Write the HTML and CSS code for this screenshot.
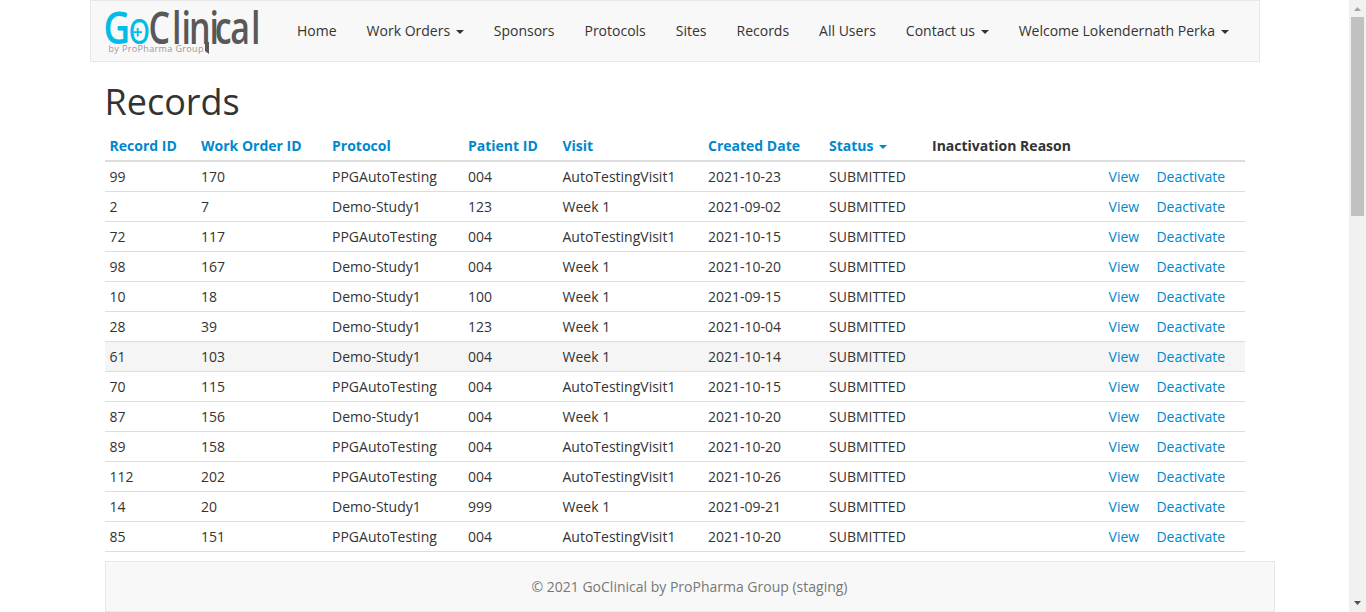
FILE: index.html
```html
<!DOCTYPE html>
<html lang="en">
<head>
<meta charset="utf-8">
<title>Records - GoClinical</title>
<link rel="stylesheet" href="styles.css">
</head>
<body>
<div class="page">
<div class="content">
<nav class="navbar">
<a class="brand" href="#">
<svg class="logo" width="160" height="54" viewBox="100 4 160 54" role="img" aria-label="GoClinical by ProPharma Group">
<text class="logo-go" transform="translate(103.500 43.500) scale(.8 1)" x="0 30.8" y="0">G<tspan class="logo-o">o</tspan></text>
<path class="logo-cross" d="M137.700 28v8.500M133.500 32.200h8.500"/>
<text class="logo-clinical" transform="translate(148.500 43.500) scale(.74 1)" x="0 31.900 44.600 54.700 82.400 89.600 110.500 138.600" y="0">Clinical</text>
<path class="logo-tail" d="M205 42h4v12l-4-3z"/>
<text class="logo-tag" x="108.500" y="52" textLength="95">by ProPharma Group</text>
</svg>
</a>
<ul class="menu">
<li><a href="#">Home</a></li>
<li><a href="#">Work Orders <b class="caret"></b></a></li>
<li><a href="#">Sponsors</a></li>
<li><a href="#">Protocols</a></li>
<li><a href="#">Sites</a></li>
<li><a href="#">Records</a></li>
<li><a href="#">All Users</a></li>
<li><a href="#">Contact us <b class="caret"></b></a></li>
<li><a href="#">Welcome Lokendernath Perka <b class="caret"></b></a></li>
</ul>
</nav>
<main class="main">
<h1>Records</h1>
<table class="records">
<colgroup><col class="c-id"><col class="c-order"><col class="c-protocol"><col class="c-patient"><col class="c-visit"><col class="c-date"><col class="c-status"><col class="c-reason"><col class="c-actions"></colgroup>
<thead><tr><th><a href="#">Record ID</a></th><th><a href="#">Work Order ID</a></th><th><a href="#">Protocol</a></th><th><a href="#">Patient ID</a></th><th><a href="#">Visit</a></th><th><a href="#">Created Date</a></th><th><a href="#">Status <b class="caret"></b></a></th><th>Inactivation Reason</th><th></th></tr></thead>
<tbody>
<tr><td>99</td><td>170</td><td>PPGAutoTesting</td><td>004</td><td>AutoTestingVisit1</td><td>2021-10-23</td><td>SUBMITTED</td><td></td><td><a href="#">View</a><a href="#">Deactivate</a></td></tr>
<tr><td>2</td><td>7</td><td>Demo-Study1</td><td>123</td><td>Week 1</td><td>2021-09-02</td><td>SUBMITTED</td><td></td><td><a href="#">View</a><a href="#">Deactivate</a></td></tr>
<tr><td>72</td><td>117</td><td>PPGAutoTesting</td><td>004</td><td>AutoTestingVisit1</td><td>2021-10-15</td><td>SUBMITTED</td><td></td><td><a href="#">View</a><a href="#">Deactivate</a></td></tr>
<tr><td>98</td><td>167</td><td>Demo-Study1</td><td>004</td><td>Week 1</td><td>2021-10-20</td><td>SUBMITTED</td><td></td><td><a href="#">View</a><a href="#">Deactivate</a></td></tr>
<tr><td>10</td><td>18</td><td>Demo-Study1</td><td>100</td><td>Week 1</td><td>2021-09-15</td><td>SUBMITTED</td><td></td><td><a href="#">View</a><a href="#">Deactivate</a></td></tr>
<tr><td>28</td><td>39</td><td>Demo-Study1</td><td>123</td><td>Week 1</td><td>2021-10-04</td><td>SUBMITTED</td><td></td><td><a href="#">View</a><a href="#">Deactivate</a></td></tr>
<tr class="hovered"><td>61</td><td>103</td><td>Demo-Study1</td><td>004</td><td>Week 1</td><td>2021-10-14</td><td>SUBMITTED</td><td></td><td><a href="#">View</a><a href="#">Deactivate</a></td></tr>
<tr><td>70</td><td>115</td><td>PPGAutoTesting</td><td>004</td><td>AutoTestingVisit1</td><td>2021-10-15</td><td>SUBMITTED</td><td></td><td><a href="#">View</a><a href="#">Deactivate</a></td></tr>
<tr><td>87</td><td>156</td><td>Demo-Study1</td><td>004</td><td>Week 1</td><td>2021-10-20</td><td>SUBMITTED</td><td></td><td><a href="#">View</a><a href="#">Deactivate</a></td></tr>
<tr><td>89</td><td>158</td><td>PPGAutoTesting</td><td>004</td><td>AutoTestingVisit1</td><td>2021-10-20</td><td>SUBMITTED</td><td></td><td><a href="#">View</a><a href="#">Deactivate</a></td></tr>
<tr><td>112</td><td>202</td><td>PPGAutoTesting</td><td>004</td><td>AutoTestingVisit1</td><td>2021-10-26</td><td>SUBMITTED</td><td></td><td><a href="#">View</a><a href="#">Deactivate</a></td></tr>
<tr><td>14</td><td>20</td><td>Demo-Study1</td><td>999</td><td>Week 1</td><td>2021-09-21</td><td>SUBMITTED</td><td></td><td><a href="#">View</a><a href="#">Deactivate</a></td></tr>
<tr><td>85</td><td>151</td><td>PPGAutoTesting</td><td>004</td><td>AutoTestingVisit1</td><td>2021-10-20</td><td>SUBMITTED</td><td></td><td><a href="#">View</a><a href="#">Deactivate</a></td></tr>
</tbody>
</table>
<footer class="footer">© 2021 GoClinical by ProPharma Group (staging)</footer>
</main>
</div>
<div class="scrollbar">
<svg width="17" height="17" viewBox="0 0 17 17"><path d="M5 11h7L8.500 7z" fill="#a3a3a3"/></svg>
<div class="thumb"></div>
<svg class="down" width="17" height="17" viewBox="0 0 17 17"><path d="M5 6h7L8.500 10z" fill="#505050"/></svg>
</div>
</div>
</body>
</html>
```
FILE: styles.css
```css
* { box-sizing: border-box; }
body {
  margin: 0;
  overflow: hidden;
  background: #fff;
  color: #333;
  font: 14px/20px "Open Sans", "Noto Sans", sans-serif;
}
a { color: #0088cc; text-decoration: none; }
.page { display: flex; height: 612px; }
.content { flex: 1; padding-left: 90px; }
.navbar {
  display: flex;
  width: 1170px;
  height: 62px;
  padding-left: 9px;
  background: #f8f8f8;
  border: 1px solid #e7e7e7;
}
.brand { padding-top: 3px; }
.logo { display: block; overflow: visible; }
.logo text { font-size: 46px; font-weight: 600; }
.logo-go { fill: #00bce7; }
.logo .logo-o { font-weight: 400; }
.logo-cross { stroke: #00bce7; stroke-width: 1.8; }
.logo-clinical, .logo-tail { fill: #585858; }
.logo .logo-tag { font-size: 9px; font-weight: 400; fill: #999; }
.menu {
  display: flex;
  margin: 0;
  padding: 20px 0 0 22px;
  list-style: none;
}
.menu a { display: block; padding: 0 15px; color: #333; white-space: nowrap; }
.caret {
  display: inline-block;
  margin-left: 2px;
  vertical-align: middle;
  border-top: 4px solid;
  border-left: 4px solid transparent;
  border-right: 4px solid transparent;
}
.main { padding: 20px 0 0 15px; }
h1 { margin: 0 0 9px -0.5px; font-size: 36px; font-weight: 400; line-height: 40px; }
.records { width: 1140px; table-layout: fixed; border-spacing: 0; }
.c-id { width: 91px; }
.c-order { width: 131px; }
.c-protocol { width: 136px; }
.c-patient { width: 94.5px; }
.c-visit { width: 145.5px; }
.c-date { width: 121px; }
.c-status { width: 103px; }
.c-reason { width: 176px; }
.c-actions { width: 142px; }
th, td { padding: 5px 5px 4px; text-align: left; white-space: nowrap; }
th:first-child, td:first-child { padding-left: 4.6px; }
th { height: 31px; border-bottom: 2px solid #ddd; font-weight: 700; }
td { height: 30px; border-bottom: 1px solid #ddd; }
td:last-child { padding-left: 5.6px; }
td a + a { margin-left: 17.2px; }
.hovered td { background: #f5f5f5; }
.footer {
  width: 1170px;
  height: 51px;
  margin-top: 9px;
  padding: 15px 1px 0 0;
  background: #f8f8f8;
  border: 1px solid #e7e7e7;
  color: #777;
  text-align: center;
}
.scrollbar { display: flex; flex-direction: column; width: 17px; background: #f1f1f1; }
.thumb { width: 13px; height: 199px; margin: 0 2px; background: #c1c1c1; }
.down { margin-top: auto; }
```
